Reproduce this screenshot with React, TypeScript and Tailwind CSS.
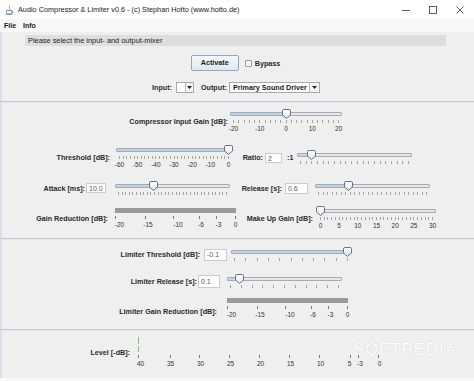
import React from "react";

const TICK = "#a4a4a4";

function Thumb({ left }: { left: number }) {
  return (
    <svg width="9" height="10" viewBox="0 0 9 10" className="absolute top-0" style={{ left }}>
      <defs>
        <linearGradient id="thumbFill" x1="0" y1="0" x2="0" y2="1">
          <stop offset="0" stopColor="#ffffff" />
          <stop offset="1" stopColor="#e2e7ee" />
        </linearGradient>
      </defs>
      <path d="M1.8 0.5H7.2Q8.5 0.5 8.5 1.8V6L4.5 9.4L0.5 6V1.8Q0.5 0.5 1.8 0.5Z" fill="url(#thumbFill)" stroke="#66727f" />
    </svg>
  );
}

function Slider({ width, value, ticks, labels }: { width: number; value: number; ticks: number; labels?: string[] }) {
  const span = width - 9;
  const pos = 4.5 + value * span;
  const xs = Array.from({ length: ticks }, (_, i) => Math.floor(4.5 + (i * span) / (ticks - 1)) + 0.5);
  return (
    <div className="relative shrink-0" style={{ width }}>
      <div className="h-[10px] px-[1px] pt-[3px]">
        <div className="h-[4px] overflow-hidden rounded-[1px] border border-[#a2acb8] bg-[#e8e8e8]">
          <div className="h-full bg-[#c3d4e8]" style={{ width: Math.max(0, pos - 2) }} />
        </div>
      </div>
      <Thumb left={pos - 4.5} />
      <svg width={width} height="5" className="block">
        {xs.map((x, i) => (
          <line key={i} x1={x} x2={x} y1="1" y2="4" stroke={TICK} strokeWidth="1" />
        ))}
      </svg>
      {labels && (
        <div className="relative h-[10px]">
          {labels.map((l, i) => (
            <span
              key={i}
              className="absolute top-0 -translate-x-1/2 whitespace-nowrap text-[6.5px] leading-[10px] text-[#333]"
              style={{ left: 4.5 + (i * span) / (labels.length - 1) }}
            >
              {l}
            </span>
          ))}
        </div>
      )}
    </div>
  );
}

const GR_TICKS = [0.5, 30, 58.5, 84, 101.5, 120.5];
const GR_LABELS: [number, string][] = [
  [4.5, "-20"],
  [33, "-15"],
  [63, "-10"],
  [86, "-6"],
  [103.5, "-3"],
  [120.5, "0"],
];

function GainBar() {
  return (
    <div className="w-[121px] shrink-0">
      <div className="h-[5px] bg-[#9a9a9a]" />
      <svg width="122" height="4" className="mt-[3px] block">
        {GR_TICKS.map((x, i) => (
          <line key={i} x1={Math.floor(x) + 0.5} x2={Math.floor(x) + 0.5} y1="0" y2="3" stroke="#777" strokeWidth="1" />
        ))}
      </svg>
      <div className="relative h-[10px]">
        {GR_LABELS.map(([x, l]) => (
          <span key={l} className="absolute top-0 -translate-x-1/2 text-[6.5px] leading-[10px] text-[#333]" style={{ left: x }}>
            {l}
          </span>
        ))}
      </div>
    </div>
  );
}

const LEVEL: [number, number, string][] = [
  [1, 3.5, "40"],
  [33, 33.5, "35"],
  [62, 63.5, "30"],
  [92, 93.5, "25"],
  [122, 123.5, "20"],
  [152, 153.5, "15"],
  [182, 183.5, "10"],
  [213, 212.5, "5"],
  [221, 223, "-3"],
  [241, 242.5, "0"],
];

function LevelMeter() {
  return (
    <div className="w-[250px] shrink-0">
      <svg width="250" height="15" className="block">
        <line x1="1.5" x2="1.5" y1="0" y2="7" stroke="#78c878" strokeWidth="1" />
        <line x1="1.5" x2="1.5" y1="9" y2="15" stroke="#78c878" strokeWidth="1" />
      </svg>
      <svg width="250" height="4" className="mt-[3px] block">
        {LEVEL.map(([x], i) => (
          <line key={i} x1={x + 0.5} x2={x + 0.5} y1="0" y2="3" stroke="#777" strokeWidth="1" />
        ))}
      </svg>
      <div className="relative mt-[1px] h-[8px]">
        {LEVEL.map(([, c, l]) => (
          <span key={l} className="absolute top-0 -translate-x-1/2 text-[6.5px] leading-[8px] text-[#333]" style={{ left: c }}>
            {l}
          </span>
        ))}
      </div>
    </div>
  );
}

function Field({ value, className }: { value: string; className: string }) {
  return (
    <div className={`shrink-0 border border-[#cbcbcb] bg-white pl-[2px] text-[7px] leading-[9px] text-[#5a5a5a] ${className}`}>
      {value}
    </div>
  );
}

function Label({ text, className }: { text: string; className: string }) {
  return <div className={`shrink-0 whitespace-nowrap text-right text-[7.2px] font-bold leading-[9px] text-[#2b2b2b] ${className}`}>{text}</div>;
}

function Arrow() {
  return (
    <svg width="5" height="3" viewBox="0 0 5 3">
      <path d="M0 0H5L2.5 3Z" fill="#222" />
    </svg>
  );
}

function Separator() {
  return <div className="h-[2px] border-b border-[#e2e4e7] bg-[#c7cbd1]" />;
}

export default function App() {
  return (
    <div className="relative h-[381px] w-[474px] overflow-hidden bg-[#efefef] font-['Liberation_Sans',Arial,sans-serif] shadow-[inset_2px_0_0_#d7e2ee]">
      {/* Title bar */}
      <div className="flex h-[19px] items-center bg-white">
        <svg width="9" height="10" viewBox="0 0 9 10" className="ml-[5px]">
          <path d="M4.6 0.4C3.2 1.8 5.9 2.8 4.4 4.4" fill="none" stroke="#e76f00" strokeWidth="0.9" />
          <path d="M1.4 5.4H6.8V7.4Q6.8 8.8 5.4 8.8H2.8Q1.4 8.8 1.4 7.4Z" fill="none" stroke="#5382a1" strokeWidth="0.9" />
          <path d="M6.8 6Q8.4 6 7.9 7.2Q7.5 7.9 6.6 7.9" fill="none" stroke="#5382a1" strokeWidth="0.8" />
          <path d="M0.8 9.6H7.6" stroke="#5382a1" strokeWidth="0.7" />
        </svg>
        <span className="ml-[4px] whitespace-nowrap text-[7.3px] leading-[9px] text-[#1a1a1a]">
          Audio Compressor &amp; Limiter v0.6 - (c) Stephan Hotto (www.hotto.de)
        </span>
        <div className="ml-auto flex h-full">
          <div className="flex w-[27px] items-center justify-center">
            <svg width="8" height="8" viewBox="0 0 8 8">
              <line x1="0" x2="8" y1="4.5" y2="4.5" stroke="#333" strokeWidth="0.8" />
            </svg>
          </div>
          <div className="flex w-[27px] items-center justify-center">
            <svg width="8" height="8" viewBox="0 0 8 8">
              <rect x="0.5" y="0.5" width="7" height="7" fill="none" stroke="#333" strokeWidth="0.8" />
            </svg>
          </div>
          <div className="flex w-[28px] items-center justify-center">
            <svg width="8" height="8" viewBox="0 0 8 8">
              <path d="M0.5 0.5L7.5 7.5M7.5 0.5L0.5 7.5" stroke="#333" strokeWidth="0.8" />
            </svg>
          </div>
        </div>
      </div>

      {/* Menu bar */}
      <div className="flex h-[13px] items-center gap-[7px] bg-[#f8f8f8] pl-[4px] text-[7px] font-bold leading-[9px] text-[#222]">
        <span>File</span>
        <span>Info</span>
      </div>

      {/* Status */}
      <div className="ml-[25px] mt-[3px] flex h-[11px] w-[421px] items-center bg-[#dedede] pl-[3px] text-[7.4px] leading-[9px] text-[#1c1c1c]">
        Please select the input- and output-mixer
      </div>

      {/* Activate / Bypass */}
      <div className="mt-[9px] flex h-[16px] items-center justify-center pr-[3px]">
        <div className="flex h-[16px] w-[48px] items-center justify-center rounded-[2px] border border-[#8aa6c8] bg-gradient-to-b from-[#f7f9fc] to-[#e1e7ef] text-[7.2px] font-bold text-[#1e1e1e]">
          Activate
        </div>
        <div className="ml-[6px] h-[7px] w-[7px] rounded-[1px] border border-[#8e9cab] bg-[#f3f5f8]" />
        <span className="ml-[3px] text-[7.2px] font-bold leading-[9px] text-[#2b2b2b]">Bypass</span>
      </div>

      {/* Mixer selection */}
      <div className="mt-[11px] flex h-[11px] items-center justify-center pr-[2px] text-[7.2px] font-bold leading-[9px] text-[#2b2b2b]">
        <span>Input:</span>
        <div className="ml-[4px] flex h-[11px] w-[18px] border border-[#a9a9a9] bg-white">
          <div className="w-[8px]" />
          <div className="flex flex-1 items-center justify-center border-l border-[#b8b8b8] bg-[#f4f4f4]">
            <Arrow />
          </div>
        </div>
        <span className="ml-[7px]">Output:</span>
        <div className="ml-[2px] flex h-[11px] w-[91px] border border-[#a9a9a9] bg-white">
          <div className="flex flex-1 items-center whitespace-nowrap pl-[3px] text-[#1c1c1c]">Primary Sound Driver</div>
          <div className="flex w-[10px] items-center justify-center border-l border-[#b8b8b8] bg-[#f4f4f4]">
            <Arrow />
          </div>
        </div>
      </div>

      <div className="mt-[8px]">
        <Separator />
      </div>

      {/* Compressor */}
      <div className="flex h-[37px] items-center">
        <Label text="Compressor Input Gain [dB]:" className="w-[228px]" />
        <div className="ml-[1px]">
          <Slider width={114} value={0.5} ticks={21} labels={["-20", "-10", "0", "10", "20"]} />
        </div>
      </div>

      <div className="flex h-[35px] items-center">
        <Label text="Threshold [dB]:" className="w-[110px]" />
        <div className="ml-[5px]">
          <Slider width={118} value={1} ticks={31} labels={["-60", "-50", "-40", "-30", "-20", "-10", "0"]} />
        </div>
        <Label text="Ratio:" className="w-[30px]" />
        <Field value="2" className="ml-[2px] h-[10px] w-[17px]" />
        <span className="ml-[5px] w-[9px] text-[7.2px] font-bold leading-[9px] text-[#2b2b2b]">:1</span>
        <Slider width={117} value={0.1} ticks={20} />
      </div>

      <div className="flex h-[26px] items-center">
        <Label text="Attack [ms]:" className="w-[85px]" />
        <Field value="10.0" className="ml-[1px] h-[10px] w-[20px]" />
        <div className="ml-[8px]">
          <Slider width={117} value={0.32} ticks={31} />
        </div>
        <Label text="Release [s]:" className="w-[51px]" />
        <Field value="0.6" className="ml-[3px] h-[11px] w-[23px]" />
        <div className="ml-[6px]">
          <Slider width={117} value={0.28} ticks={25} />
        </div>
      </div>

      <div className="flex h-[35px] items-center">
        <Label text="Gain Reduction [dB]:" className="w-[108px]" />
        <div className="ml-[7px]">
          <GainBar />
        </div>
        <Label text="Make Up Gain [dB]:" className="w-[77px]" />
        <div className="ml-[3px]">
          <Slider width={121} value={0} ticks={31} labels={["0", "5", "10", "15", "20", "25", "30"]} />
        </div>
      </div>

      <div className="h-[2px]" />
      <Separator />

      {/* Limiter */}
      <div className="flex h-[29px] items-center">
        <Label text="Limiter Threshold [dB]:" className="w-[200px]" />
        <Field value="-0.1" className="ml-[4px] h-[12px] w-[23px] leading-[10px]" />
        <div className="ml-[3px]">
          <Slider width={122} value={1} ticks={11} />
        </div>
      </div>

      <div className="flex h-[24px] items-center">
        <Label text="Limiter Release [s]:" className="w-[197px]" />
        <Field value="0.1" className="ml-[1px] h-[13px] w-[22px] leading-[11px]" />
        <div className="ml-[6px]">
          <Slider width={117} value={0.08} ticks={11} />
        </div>
      </div>

      <div className="flex h-[32px] items-center">
        <Label text="Limiter Gain Reduction [dB]:" className="w-[217px] pt-[4px]" />
        <div className="ml-[10px]">
          <GainBar />
        </div>
      </div>

      <div className="h-[4px]" />
      <Separator />

      {/* Level */}
      <div className="relative flex h-[43px] items-center">
        <Label text="Level [-dB]:" className="w-[130px]" />
        <div className="ml-[7px]">
          <LevelMeter />
        </div>
        <span className="pointer-events-none absolute left-[353px] top-[11px] text-[16px] leading-[16px] tracking-[1.5px] text-white [text-shadow:0_0_1px_rgba(0,0,0,0.18)]">
          SOFTPEDIA
        </span>
      </div>

      <div className="h-[4px]" />
      <div className="h-[3px] bg-[#f9f9f9]" />
    </div>
  );
}
